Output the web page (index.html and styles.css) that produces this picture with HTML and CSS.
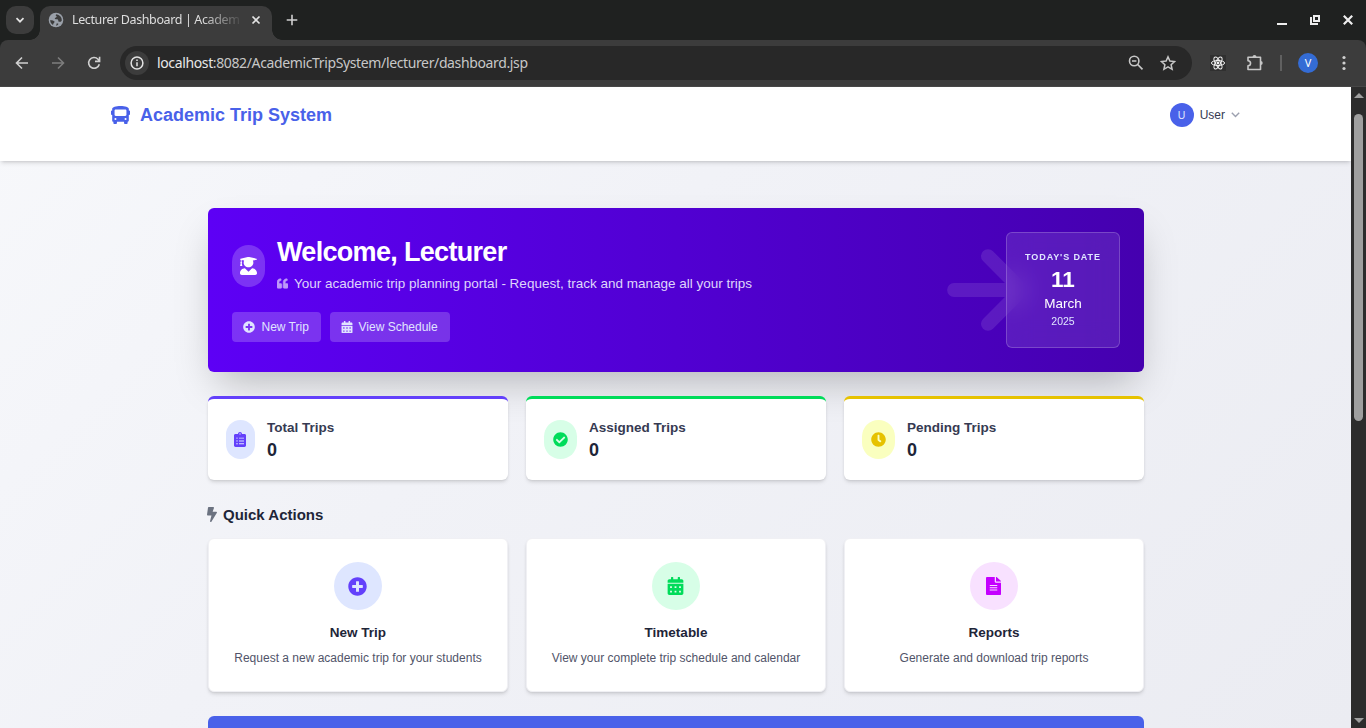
FILE: index.html
```html
<!DOCTYPE html>
<html lang="en">
<head>
<meta charset="utf-8">
<title>Lecturer Dashboard | Academic Trip System</title>
<link rel="stylesheet" href="styles.css">
</head>
<body>
<svg class="sprite" aria-hidden="true">
  <symbol id="plus" viewBox="0 0 512 512"><path d="M256 8C119 8 8 119 8 256s111 248 248 248 248-111 248-248S393 8 256 8zm144 276c0 6.600-5.400 12-12 12h-92v92c0 6.600-5.400 12-12 12h-56c-6.600 0-12-5.400-12-12v-92h-92c-6.600 0-12-5.400-12-12v-56c0-6.600 5.400-12 12-12h92v-92c0-6.600 5.400-12 12-12h56c6.600 0 12 5.400 12 12v92h92c6.600 0 12 5.400 12 12v56z"/></symbol>
  <symbol id="calendar" viewBox="0 0 448 512"><path fill-rule="evenodd" d="M0 464c0 26.500 21.500 48 48 48h352c26.500 0 48-21.500 48-48V192H0v272zM70 260h52v56H70zM198 260h52v56h-52zM326 260h52v56h-52zM70 388h52v56H70zM198 388h52v56h-52zM326 388h52v56h-52zM400 64h-48V16c0-8.800-7.200-16-16-16h-32c-8.800 0-16 7.200-16 16v48H160V16c0-8.800-7.200-16-16-16h-32c-8.800 0-16 7.200-16 16v48H48C21.500 64 0 85.500 0 112v48h448v-48c0-26.500-21.500-48-48-48z"/></symbol>
</svg>
<div class="window">
  <div class="tabstrip">
    <div class="tab-search"><svg width="10" height="10" viewBox="0 0 10 10"><path d="M1.500 3.200 5 6.700l3.500-3.500" fill="none" stroke="#e3e3e3" stroke-width="1.700"/></svg></div>
    <div class="tab">
      <svg width="16" height="16" viewBox="0 0 16 16"><circle cx="8" cy="8" r="7.300" fill="#9aa0a9"/><path d="M8.500 2.200c-1 .5-1 1.300-.2 1.900.8.500.3 1.400-.8 1.600-1.200.2-.8 1.600.4 1.500 1.500-.1 2.400.2 2.400 1.500 0 1 .9 1.200 1.900 1.100.9-.1 1.500-.8 1.600-1.600A6 6 0 0 0 8.500 2.200zM2 8.200c1.600-.2 3.600.2 4.300 1.100.6.800 0 1.500-.6 1.900-.5.300-.2 1.100-.8 1.700A6 6 0 0 1 2 8.200zM8.800 11.200c1 .2 1.800.3 1.500 1-.3.800-1.200 1.300-2.300 1.600z" fill="#3c3c3c"/></svg>
      <span class="tab-title">Lecturer Dashboard | Academ</span>
      <svg width="10" height="10" viewBox="0 0 10 10"><path d="m1.500 1.500 7 7m0-7-7 7" stroke="#e3e3e3" stroke-width="1.700"/></svg>
    </div>
    <svg class="new-tab" width="12" height="12" viewBox="0 0 12 12"><path d="M6 .7v10.600M.7 6h10.600" stroke="#d0d0d0" stroke-width="1.600"/></svg>
    <div class="window-controls">
      <svg width="10" height="12" viewBox="0 0 10 12"><path d="M0 10h10" stroke="#eee" stroke-width="2"/></svg>
      <svg width="10" height="10" viewBox="0 0 10 10"><path d="M4 1h5v5H4zM1 2v7h7" fill="none" stroke="#eee" stroke-width="2"/></svg>
      <svg width="10" height="10" viewBox="0 0 10 10"><path d="m.8.8 8.400 8.400m0-8.400L.8 9.200" stroke="#eee" stroke-width="2.200"/></svg>
    </div>
  </div>
  <div class="toolbar">
    <svg class="nav" viewBox="0 0 14 14"><path d="M13 7H2M7 1.500 1.500 7 7 12.500" fill="none" stroke="#d0d0d0" stroke-width="1.600"/></svg>
    <svg class="nav" viewBox="0 0 14 14"><path d="M1 7h11M7 1.500 12.500 7 7 12.500" fill="none" stroke="#7d7d7d" stroke-width="1.600"/></svg>
    <svg class="nav" viewBox="0 0 14 14"><path d="M12.300 8.200A5.400 5.400 0 1 1 11 3.200l1.400 1.600M12.600.8v4.600H8" fill="none" stroke="#d0d0d0" stroke-width="1.600"/></svg>
    <div class="omnibox">
      <span class="site-info"><svg width="14" height="14" viewBox="0 0 14 14"><circle cx="7" cy="7" r="5.900" fill="none" stroke="#e3e3e3" stroke-width="1.500"/><path d="M7 6.200v4M7 3.600v1.500" stroke="#e3e3e3" stroke-width="1.500"/></svg></span>
      <span class="url"><b>localhost</b>:8082/AcademicTripSystem/lecturer/dashboard.jsp</span>
      <svg class="mag" width="16" height="16" viewBox="0 0 16 16"><circle cx="6.200" cy="6" r="4.700" fill="none" stroke="#c7c7c7" stroke-width="1.600"/><path d="M9.700 9.500 14.500 14.300M4 6h4.400" stroke="#c7c7c7" stroke-width="1.700"/></svg>
      <svg width="16" height="16" viewBox="0 0 16 16"><path d="m8 1.900 1.900 4.200 4.700.5-3.500 3.100 1 4.600L8 11.900l-4.100 2.400 1-4.600-3.500-3.100 4.700-.5z" fill="none" stroke="#c7c7c7" stroke-width="1.500"/></svg>
    </div>
    <svg class="react" width="16" height="16" viewBox="0 0 16 16"><path fill="#303030" d="M0 0h16v16H0z"/><g fill="none" stroke="#f2f2f2" stroke-width="1"><ellipse cx="8" cy="8" rx="6.600" ry="2.500"/><ellipse cx="8" cy="8" rx="6.600" ry="2.500" transform="rotate(60 8 8)"/><ellipse cx="8" cy="8" rx="6.600" ry="2.500" transform="rotate(120 8 8)"/></g><circle cx="8" cy="8" r="1.400" fill="#f2f2f2"/></svg>
    <svg class="puzzle" width="18" height="18" viewBox="0 0 18 18"><path d="M2 3.200h12.500v12.300H2v-3.700c3.400-.2 3.400-4.800 0-5z" fill="none" stroke="#c7c7c7" stroke-width="1.600" stroke-linejoin="round"/><path d="M6.500 3a2 2 0 0 1 4 0zM14.700 7a2 2 0 0 1 0 4z" fill="#c7c7c7"/></svg>
    <span class="divider"></span>
    <span class="profile">V</span>
    <svg class="kebab" width="4" height="16" viewBox="0 0 4 16" fill="#d0d0d0"><circle cx="2" cy="2.500" r="1.600"/><circle cx="2" cy="8" r="1.600"/><circle cx="2" cy="13.500" r="1.600"/></svg>
  </div>
  <div class="viewport">
    <div class="page">
      <header class="site-header">
        <a class="brand"><svg width="19" height="18" viewBox="0 0 512 512" preserveAspectRatio="none" fill="#4961e9"><path fill-rule="evenodd" d="M488 128h-8V80c0-44.800-99.200-80-224-80S32 35.200 32 80v48h-8c-13.250 0-24 10.740-24 24v80c0 13.250 10.750 24 24 24h8v160c0 17.670 14.330 32 32 32v32c0 17.670 14.330 32 32 32h32c17.670 0 32-14.330 32-32v-32h192v32c0 17.670 14.330 32 32 32h32c17.670 0 32-14.330 32-32v-32h6.400c16 0 25.600-12.800 25.600-25.600V256h8c13.250 0 24-10.740 24-24v-80c0-13.260-10.750-24-24-24zM120 400a28 28 0 1 1 0-56 28 28 0 0 1 0 56zM128 284c-17.670 0-32-14.330-32-32v-124c0-17.670 14.330-32 32-32h256c17.670 0 32 14.330 32 32v124c0 17.670-14.330 32-32 32zM392 400a28 28 0 1 1 0-56 28 28 0 0 1 0 56z"/></svg>Academic Trip System</a>
        <div class="user"><span class="avatar">U</span>User<svg width="9" height="6" viewBox="0 0 9 6"><path d="m.8.8 3.700 3.700L8.200.8" fill="none" stroke="#9ca0af" stroke-width="1.400"/></svg></div>
      </header>
      <main class="content">
        <section class="hero">
          <svg class="hero-arrow" viewBox="0 0 24 24"><path d="M5 12h14M12 5l7 7-7 7" fill="none" stroke="#fff" stroke-width="2.900" stroke-linecap="round" stroke-linejoin="round"/></svg>
          <div class="hero-main">
            <div class="hero-head">
              <span class="hero-icon"><svg width="17" height="18" viewBox="0 0 448 512" preserveAspectRatio="none" fill="#fff"><path d="M319.400 320.600L224 416l-95.400-95.400C57.100 323.700 0 382.200 0 454.400v9.600c0 26.500 21.500 48 48 48h352c26.500 0 48-21.500 48-48v-9.600c0-72.200-57.100-130.700-128.600-133.800zM13.600 79.800l6.400 1.500v58.400c-7 4.200-12 11.500-12 20.300 0 8.400 4.600 15.400 11.100 19.700L3.500 242c-1.700 6.900 2.100 14 7.600 14h41.800c5.500 0 9.300-7.100 7.600-14l-15.600-62.300C51.400 175.400 56 168.400 56 160c0-8.800-5-16.100-12-20.300V87.100l66 15.900c-8.600 17.200-14 36.400-14 57 0 70.700 57.300 128 128 128s128-57.300 128-128c0-20.600-5.300-39.800-14-57l96.300-23.200c18.200-4.400 18.200-27.100 0-31.500l-190.400-46c-13-3.100-26.700-3.100-39.700 0L13.600 48.200c-18.100 4.400-18.100 27.200 0 31.600z"/></svg></span>
              <div>
                <h1>Welcome, Lecturer</h1>
                <p class="tagline"><svg width="11" height="11" viewBox="0 0 512 512" fill="#fff" stroke="#fff" stroke-width="24" opacity=".6"><path d="M464 256h-80v-64c0-35.300 28.700-64 64-64h8c13.300 0 24-10.700 24-24V56c0-13.300-10.700-24-24-24h-8c-88.400 0-160 71.600-160 160v240c0 26.500 21.500 48 48 48h128c26.500 0 48-21.500 48-48V304c0-26.500-21.500-48-48-48zm-288 0H96v-64c0-35.300 28.700-64 64-64h8c13.300 0 24-10.700 24-24V56c0-13.300-10.700-24-24-24h-8C71.600 32 0 103.600 0 192v240c0 26.500 21.500 48 48 48h128c26.500 0 48-21.500 48-48V304c0-26.500-21.500-48-48-48z"/></svg>Your academic trip planning portal - Request, track and manage all your trips</p>
              </div>
            </div>
            <div class="hero-actions">
              <a class="chip"><svg width="12" height="12"><use href="#plus"/></svg>New Trip</a>
              <a class="chip wide"><svg width="12" height="12.500" ><use href="#calendar"/></svg>View Schedule</a>
            </div>
          </div>
          <div class="date-card">
            <span class="date-label">TODAY'S DATE</span>
            <span class="date-day">11</span>
            <span class="date-month">March</span>
            <span class="date-year">2025</span>
          </div>
        </section>
        <section class="grid stats">
          <article class="stat total"><span class="pill"><svg width="12" height="15" viewBox="0 0 384 512" preserveAspectRatio="none"><path fill-rule="evenodd" d="M336 64h-80c0-35.300-28.700-64-64-64s-64 28.700-64 64H48C21.500 64 0 85.500 0 112v352c0 26.500 21.500 48 48 48h288c26.500 0 48-21.500 48-48V112c0-26.500-21.500-48-48-48zM96 424a24 24 0 1 1 0-48 24 24 0 0 1 0 48zM96 328a24 24 0 1 1 0-48 24 24 0 0 1 0 48zM96 232a24 24 0 1 1 0-48 24 24 0 0 1 0 48zM192 40a24 24 0 1 1 0 48 24 24 0 0 1 0-48zM160 384h160v32H160zM160 288h160v32H160zM160 192h160v32H160z"/></svg></span><div><h3>Total Trips</h3><strong>0</strong></div></article>
          <article class="stat assigned"><span class="pill"><svg width="15" height="15" viewBox="0 0 512 512"><path d="M504 256c0 136.967-111.033 248-248 248S8 392.967 8 256 119.033 8 256 8s248 111.033 248 248zM227.314 387.314l184-184c6.248-6.248 6.248-16.379 0-22.627l-22.627-22.627c-6.248-6.249-16.379-6.249-22.628 0L216 308.118l-70.059-70.059c-6.248-6.248-16.379-6.248-22.628 0l-22.627 22.627c-6.248 6.248-6.248 16.379 0 22.627l104 104c6.249 6.249 16.379 6.249 22.628.001z"/></svg></span><div><h3>Assigned Trips</h3><strong>0</strong></div></article>
          <article class="stat pending"><span class="pill"><svg width="15" height="15" viewBox="0 0 512 512"><path d="M256,8C119,8,8,119,8,256S119,504,256,504,504,393,504,256,393,8,256,8Zm92.490,313h0l-20,25a16,16,0,0,1-22.490,2.500h0l-67-49.720a40,40,0,0,1-15-31.230V112a16,16,0,0,1,16-16h32a16,16,0,0,1,16,16V256l58,42.500A16,16,0,0,1,348.490,321Z"/></svg></span><div><h3>Pending Trips</h3><strong>0</strong></div></article>
        </section>
        <h2 class="section-title"><svg width="10" height="15" viewBox="0 0 320 512" preserveAspectRatio="none" fill="#6b7280"><path d="M296 160H180.600l42.600-129.800C227.200 15 215.700 0 200 0H56C44 0 33.800 8.900 32.200 20.800l-32 240C-1.700 275.200 9.500 288 24 288h118.700L96.600 482.500c-3.600 15.200 8 29.500 23.300 29.500 8.400 0 16.400-4.400 20.800-12l176-304c9.300-15.900-2.200-36-20.700-36z"/></svg>Quick Actions</h2>
        <section class="grid actions">
          <article class="action new"><span class="disc"><svg width="19" height="19"><use href="#plus"/></svg></span><h3>New Trip</h3><p>Request a new academic trip for your students</p></article>
          <article class="action timetable"><span class="disc"><svg width="17" height="18" ><use href="#calendar"/></svg></span><h3>Timetable</h3><p>View your complete trip schedule and calendar</p></article>
          <article class="action reports"><span class="disc"><svg width="15" height="18" viewBox="0 0 384 512" preserveAspectRatio="none"><path fill-rule="evenodd" d="M224 136V0H24C10.700 0 0 10.700 0 24v464c0 13.300 10.700 24 24 24h336c13.300 0 24-10.700 24-24V160H248c-13.200 0-24-10.800-24-24zM96 352h192v32H96zM96 288h192v32H96zM96 224h192v32H96zM384 121.900v6.100H256V0h6.100c6.400 0 12.500 2.500 17 7l97.900 98c4.500 4.500 7 10.600 7 16.900z"/></svg></span><h3>Reports</h3><p>Generate and download trip reports</p></article>
        </section>
        <section class="schedule-bar"></section>
      </main>
    </div>
    <div class="scrollbar"><span class="arrow-up"></span><span class="thumb"></span><span class="arrow-down"></span></div>
  </div>
</div>
</body>
</html>
```
FILE: styles.css
```css
* { box-sizing: border-box; margin: 0; }
body { overflow: hidden; font-family: "Liberation Sans", Arial, sans-serif; color: #1e2538; }
svg { display: block; flex: none; }
.sprite { position: absolute; width: 0; height: 0; }
.window { width: 1366px; height: 728px; display: flex; flex-direction: column; background: #1f2120; }

/* browser frame */
.tabstrip { height: 40px; display: flex; align-items: center; padding-left: 6px; font-family: "Noto Sans", sans-serif; }
.tab-search { width: 28px; height: 28px; border-radius: 10px; background: #3c3c3c; display: grid; place-items: center; }
.tab { position: relative; align-self: flex-end; width: 232px; height: 34px; margin-left: 6px; padding: 0 11px 6px 8px; border-radius: 10px 10px 0 0; background: #3c3c3c; display: flex; align-items: center; }
.tab::before, .tab::after { content: ""; position: absolute; bottom: 0; width: 10px; height: 10px; }
.tab::before { left: -10px; background: radial-gradient(circle at 0 0, transparent 9.500px, #3c3c3c 10px); }
.tab::after { right: -10px; background: radial-gradient(circle at 100% 0, transparent 9.500px, #3c3c3c 10px); }
.tab-title { width: 168px; margin: 0 11px 0 8px; white-space: nowrap; font-size: 12.500px; line-height: 18px; letter-spacing: -.38px; color: #dedede; -webkit-mask-image: linear-gradient(90deg, #000 130px, transparent 172px); }
.new-tab { margin-left: 14px; }
.window-controls { margin-left: auto; padding-right: 13px; display: flex; align-items: center; gap: 23px; }
.toolbar { height: 47px; display: flex; align-items: center; padding-left: 15px; border-radius: 8px 8px 0 0; background: #3c3c3c; border-bottom: 1px solid #474747; }
.nav { width: 14px; height: 14px; margin-right: 22px; }
.nav:nth-child(3) { margin-right: 19px; }
.omnibox { width: 1072px; height: 34px; padding: 0 16px 0 5px; border-radius: 17px; background: #282828; display: flex; align-items: center; }
.site-info { width: 24px; height: 24px; border-radius: 50%; background: #3c3c3c; display: grid; place-items: center; }
.url { margin: 0 0 2px 8px; font: 14px "Noto Sans", sans-serif; letter-spacing: -.37px; color: #c7c7c7; }
.url b { font-weight: 400; color: #e8e8e8; }
.mag { margin: 0 16px 0 auto; }
.react { margin-left: 18px; }
.puzzle { margin-left: 20px; }
.divider { width: 2px; height: 16px; margin: 0 16px 0 16px; background: #606060; }
.profile { width: 20px; height: 20px; border-radius: 50%; background: #346cd5; color: #fff; font: 11px/20px "Noto Sans", sans-serif; text-align: center; }
.kebab { margin-left: 24px; }

/* page */
.viewport { flex: 1; min-height: 0; display: flex; }
.page { width: 1351px; overflow: hidden; background: linear-gradient(135deg, #f7f8fb 0%, #f1f2f7 40%, #ebecf2 100%); }
.site-header { position: relative; height: 74px; padding: 16px 111px 0; display: flex; justify-content: space-between; align-items: flex-start; background: #fff; box-shadow: 0 3px 4.500px -1px rgba(0,0,0,.13), 0 1.500px 3px -1.500px rgba(0,0,0,.13); }
.brand { height: 24px; display: flex; align-items: center; gap: 10px; font-size: 18px; font-weight: 700; color: #4961e9; }
.brand svg { margin-bottom: 1px; }
.user { display: flex; align-items: center; gap: 6px; font-size: 12px; color: #363a52; }
.avatar { width: 24px; height: 24px; border-radius: 50%; background: #4961e9; color: #e0e6fd; font-size: 10.500px; line-height: 24px; text-align: center; }
.content { width: 936px; margin-top: 47px; margin-left: 208px; }
.hero { position: relative; height: 164px; padding: 24px; border-radius: 6px; display: flex; justify-content: space-between; background: linear-gradient(90deg, #5d00f5, #4500af); box-shadow: 0 18.750px 37.500px -9px rgba(0,0,0,.25); }
.hero-arrow { position: absolute; right: 98px; top: 24px; width: 116px; height: 116px; opacity: .1; }
.hero-head { display: flex; gap: 12px; align-items: center; height: 68px; }
.hero-icon { width: 33px; height: 42px; border-radius: 16.500px; background: rgba(255,255,255,.2); display: grid; place-items: center; }
h1 { margin-top: -3px; font-size: 27px; line-height: 30px; letter-spacing: -.68px; color: #fff; }
.tagline { margin-top: 8px; display: flex; align-items: center; gap: 6px; font-size: 13.500px; line-height: 18px; color: #dfd5fb; }
.hero-actions { display: flex; gap: 9px; margin-top: 12px; }
.chip { height: 30px; width: 89px; padding-left: 11px; border-radius: 4px; background: rgba(255,255,255,.2); color: #e0e4ff; fill: #e0e4ff; display: flex; align-items: center; gap: 6.500px; font-size: 12px; }
.chip.wide { width: 120px; gap: 5.500px; }
.date-card { position: relative; width: 114px; height: 116px; border: 1px solid rgba(255,255,255,.2); border-radius: 6px; background: rgba(255,255,255,.1); backdrop-filter: blur(12px); display: flex; flex-direction: column; align-items: center; padding-top: 18px; color: #fff; }
.date-label { font-size: 9px; line-height: 12px; font-weight: 700; letter-spacing: .9px; color: #e0e6ff; }
.date-day { margin-top: 4px; font-size: 22.500px; line-height: 26px; font-weight: 700; }
.date-month { margin-top: 1px; font-size: 13.500px; line-height: 20px; }
.date-year { font-size: 10.500px; line-height: 15px; color: #e0e6ff; }
.grid { display: grid; grid-template-columns: repeat(3, 300px); gap: 18px; }
.stats { margin-top: 24px; position: relative; }
.stat, .action { background: #fff; border-radius: 6px; box-shadow: 0 3px 4.500px -1px rgba(0,0,0,.13), 0 1.500px 3px -1.500px rgba(0,0,0,.13); }
.stat { height: 84px; padding: 0 18px; border-top: 3px solid; display: flex; align-items: center; gap: 12px; }
.pill { width: 33px; height: 39px; border-radius: 17px; display: grid; place-items: center; }
.pill svg { margin-right: 1px; }
.total .pill { width: 29px; }
.total { border-color: #6340fb; } .total .pill { background: #dee6ff; fill: #6340fb; }
.assigned { border-color: #00dc5a; } .assigned .pill { background: #d7fee7; fill: #00dc5a; }
.pending { border-color: #e6c200; } .pending .pill { background: #faffbf; fill: #e6c200; }
.stat h3 { font-size: 13.500px; line-height: 20px; color: #363a52; }
.stat strong { display: block; font-size: 18px; line-height: 24px; color: #1e2538; }
.section-title { margin: 24px 0 0 -1px; height: 21px; display: flex; align-items: center; gap: 6px; font-size: 15px; }
.actions { margin-top: 12.500px; }
.action { height: 154px; border: 1px solid #f0f0f4; padding-top: 23.500px; display: flex; flex-direction: column; align-items: center; }
.disc { width: 48px; height: 48px; border-radius: 50%; display: grid; place-items: center; }
.disc svg { margin-right: 1px; }
.new .disc { background: #dee6ff; fill: #6340fb; }
.timetable .disc { background: #d7fee7; fill: #00dc5a; }
.reports .disc { background: #f8e1ff; fill: #c400ff; }
.action h3 { margin-top: 12px; font-size: 13.500px; line-height: 21px; }
.action p { margin-top: 6px; font-size: 12px; line-height: 18px; color: #515469; }
.schedule-bar { height: 60px; margin-top: 24.500px; border-radius: 6px 6px 0 0; background: #4961e9; }

.scrollbar { width: 15px; padding: 6px 3px 5px; background: #2c2c2c; display: flex; flex-direction: column; align-items: center; }
.thumb { width: 9px; height: 307px; margin-top: 16px; border-radius: 5px; background: #9f9f9f; }
.arrow-up, .arrow-down { border: 5px solid transparent; }
.arrow-up { border-top: 0; border-bottom-color: #9f9f9f; }
.arrow-down { margin-top: auto; border-bottom: 0; border-top-color: #9f9f9f; }
```
